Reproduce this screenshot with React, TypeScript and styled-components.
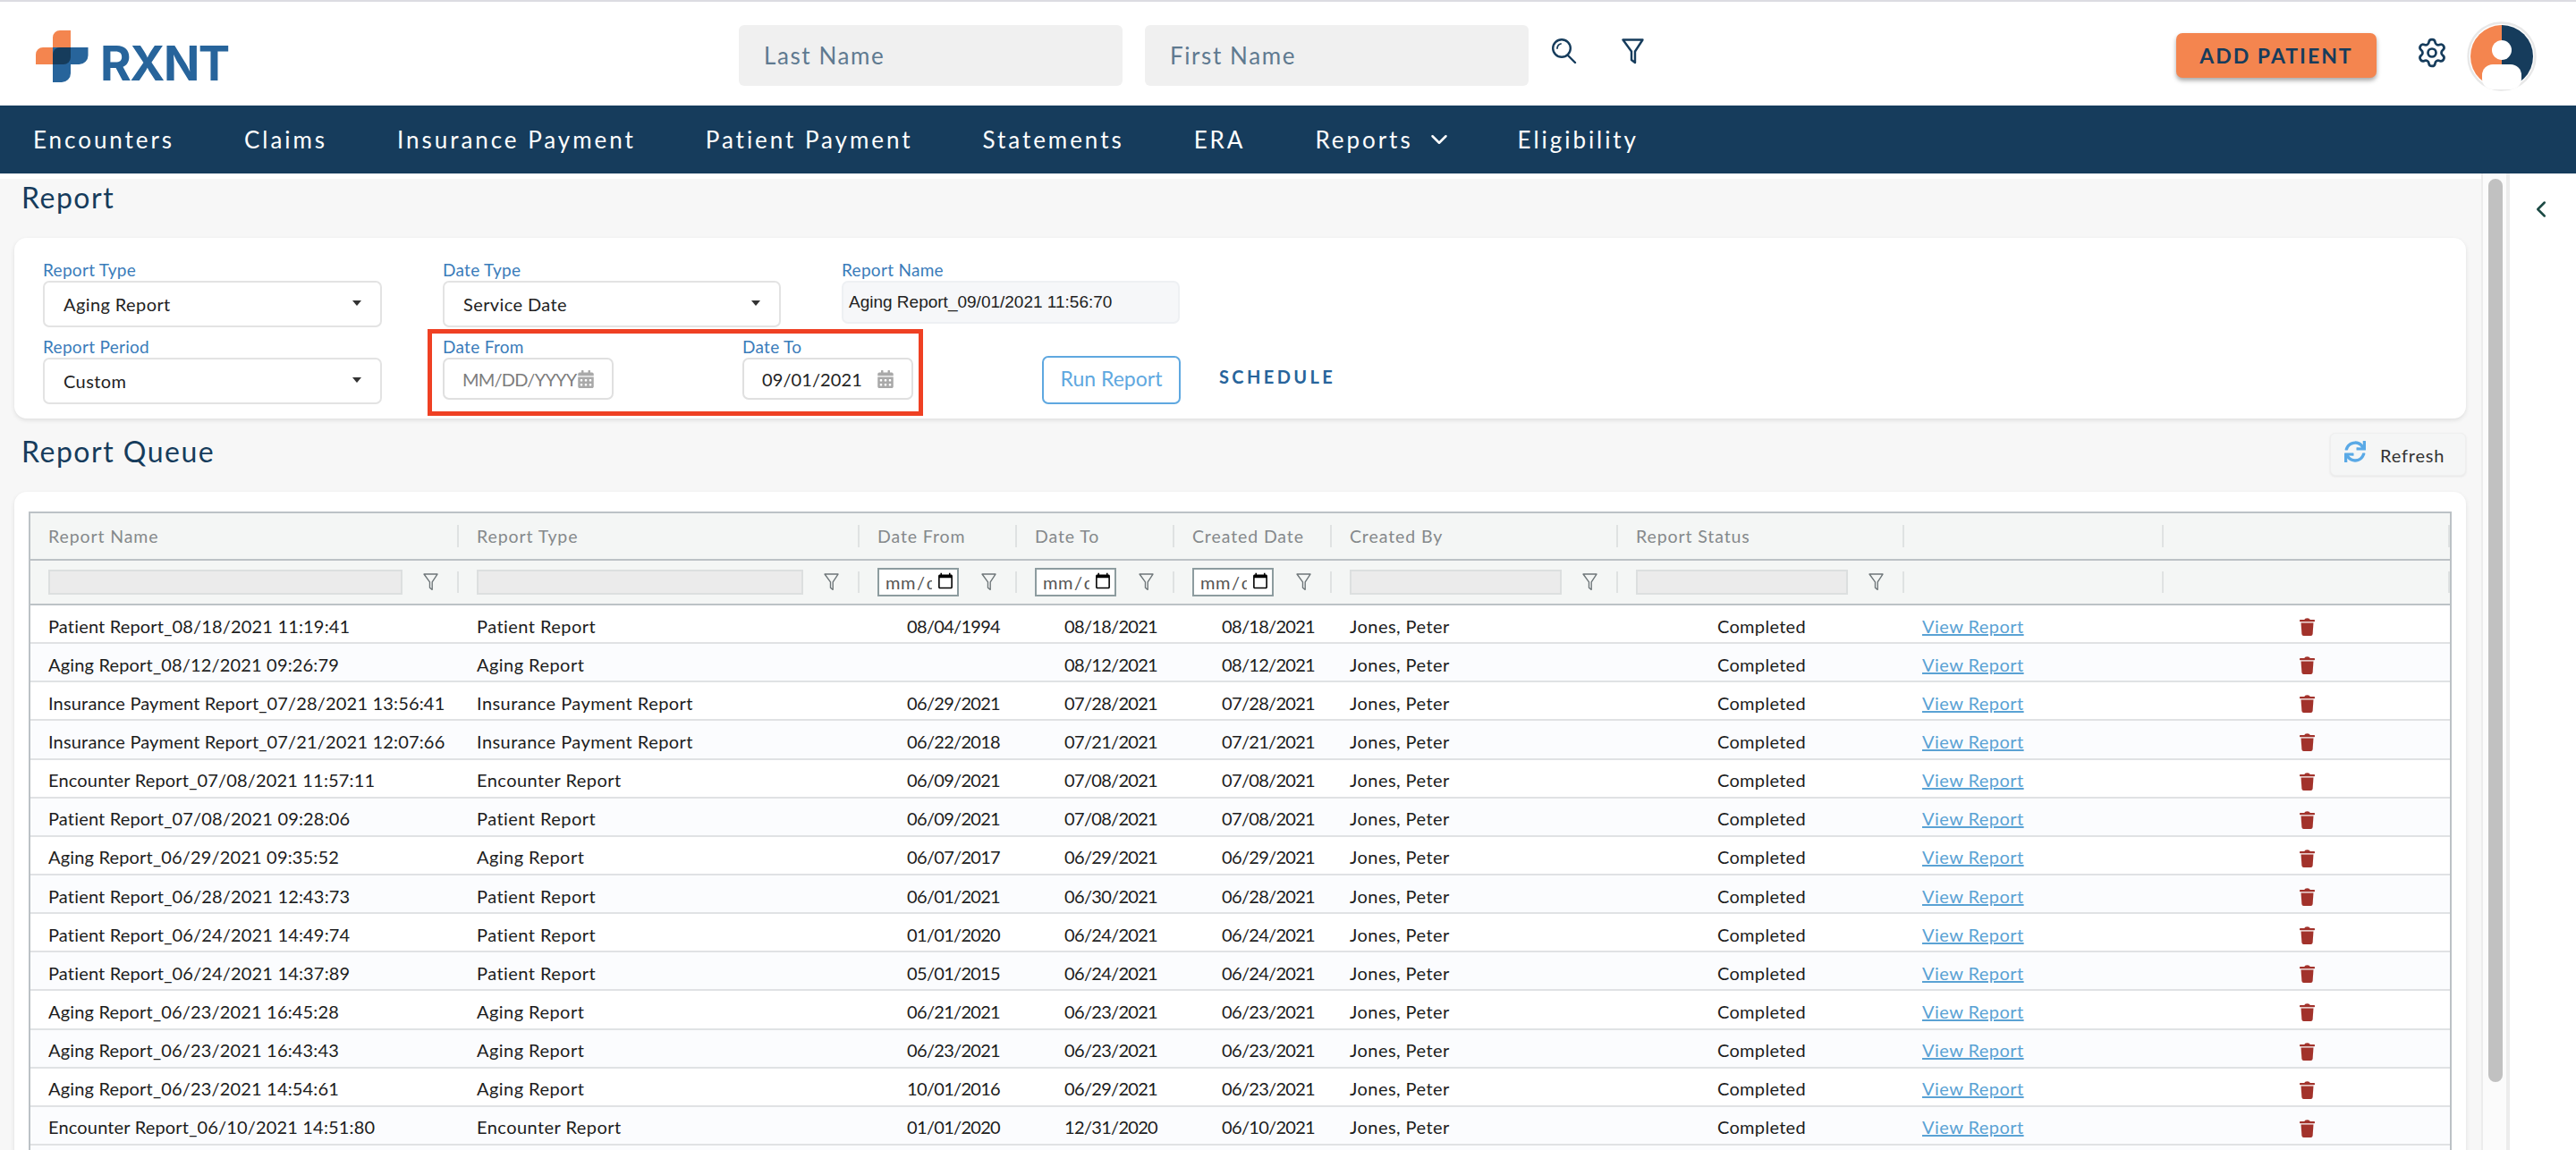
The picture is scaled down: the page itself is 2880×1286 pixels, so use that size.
import styled, { createGlobalStyle } from 'styled-components';
import { ChevronDown, ChevronLeft, Settings } from 'lucide-react';
import { FaCalendarAlt, FaSync } from 'react-icons/fa';

const FONT = 'Lato, "Open Sans", sans-serif';
const NAVY = '#163c5c';
const COLUMNS = '479px 448px 176px 176px 176px 320px 320px 290px 320px';

const NAV_ITEMS = ['Encounters', 'Claims', 'Insurance Payment', 'Patient Payment', 'Statements', 'ERA', 'Reports', 'Eligibility'];

const ROWS = [
  ['Patient Report_08/18/2021 11:19:41', 'Patient Report', '08/04/1994', '08/18/2021', '08/18/2021'],
  ['Aging Report_08/12/2021 09:26:79', 'Aging Report', '', '08/12/2021', '08/12/2021'],
  ['Insurance Payment Report_07/28/2021 13:56:41', 'Insurance Payment Report', '06/29/2021', '07/28/2021', '07/28/2021'],
  ['Insurance Payment Report_07/21/2021 12:07:66', 'Insurance Payment Report', '06/22/2018', '07/21/2021', '07/21/2021'],
  ['Encounter Report_07/08/2021 11:57:11', 'Encounter Report', '06/09/2021', '07/08/2021', '07/08/2021'],
  ['Patient Report_07/08/2021 09:28:06', 'Patient Report', '06/09/2021', '07/08/2021', '07/08/2021'],
  ['Aging Report_06/29/2021 09:35:52', 'Aging Report', '06/07/2017', '06/29/2021', '06/29/2021'],
  ['Patient Report_06/28/2021 12:43:73', 'Patient Report', '06/01/2021', '06/30/2021', '06/28/2021'],
  ['Patient Report_06/24/2021 14:49:74', 'Patient Report', '01/01/2020', '06/24/2021', '06/24/2021'],
  ['Patient Report_06/24/2021 14:37:89', 'Patient Report', '05/01/2015', '06/24/2021', '06/24/2021'],
  ['Aging Report_06/23/2021 16:45:28', 'Aging Report', '06/21/2021', '06/23/2021', '06/23/2021'],
  ['Aging Report_06/23/2021 16:43:43', 'Aging Report', '06/23/2021', '06/23/2021', '06/23/2021'],
  ['Aging Report_06/23/2021 14:54:61', 'Aging Report', '10/01/2016', '06/29/2021', '06/23/2021'],
  ['Encounter Report_06/10/2021 14:51:80', 'Encounter Report', '01/01/2020', '12/31/2020', '06/10/2021'],
];

const GlobalStyle = createGlobalStyle`
  html, body {
    margin: 0;
    padding: 0;
    background: #fff;
    font-family: ${FONT};
  }
  * {
    box-sizing: border-box;
  }
`;

const Page = styled.div`
  height: 100vh;
  display: flex;
  flex-direction: column;
  overflow: hidden;
  border-top: 2px solid #dcdce2;
`;

const Header = styled.header`
  height: 116px;
  flex: none;
  display: flex;
  align-items: center;
  padding: 0 44px 0 40px;
`;

const Logo = styled.div`
  width: 786px;
  margin-top: 6px;
  display: flex;
  align-items: center;
  gap: 13px;
`;

const LogoText = styled.span`
  padding-top: 16px;
  font-family: Inter, sans-serif;
  font-weight: 700;
  font-size: 53px;
  letter-spacing: -1.5px;
  line-height: 60px;
  color: #27649b;
`;

const SearchBox = styled.div`
  width: 429px;
  height: 68px;
  margin-right: 25px;
  margin-top: 4px;
  padding-left: 28px;
  display: flex;
  align-items: center;
  border-radius: 6px;
  background: #f0f0f0;
  color: #5f7a90;
  font-size: 26px;
  letter-spacing: 1.6px;
`;

const IconButton = styled.div<{ $gap: number }>`
  display: flex;
  margin-right: ${(p) => p.$gap}px;
  margin-top: -6px;
  color: ${NAVY};
`;

const AddPatient = styled.button`
  width: 224px;
  height: 50px;
  margin-left: auto;
  margin-top: 4px;
  border: 0;
  border-radius: 7px;
  background: #f4854f;
  color: ${NAVY};
  font-family: ${FONT};
  font-weight: 700;
  font-size: 23px;
  letter-spacing: 2px;
  box-shadow: 0 3px 5px rgba(0, 0, 0, 0.35);
`;

const Gear = styled.div`
  display: flex;
  margin: -2px 21px 0 44px;
  color: ${NAVY};
`;

const Avatar = styled.svg`
  width: 78px;
  height: 78px;
  margin-top: 6px;
`;

const Nav = styled.nav`
  height: 76px;
  flex: none;
  display: flex;
  align-items: center;
  gap: 78px;
  padding-left: 37px;
  background: ${NAVY};
`;

const NavItem = styled.span`
  display: flex;
  align-items: center;
  gap: 14px;
  color: #fff;
  font-size: 26px;
  letter-spacing: 2.95px;

  svg {
    margin-right: -5px;
  }
`;

const Body = styled.div`
  flex: 1;
  min-height: 0;
  display: flex;
`;

const Main = styled.main`
  flex: 1;
  min-width: 0;
  margin-top: 6px;
  padding: 0 17px 0 16px;
  background: #f7f7f7;
  overflow: hidden;
`;

const Track = styled.div`
  width: 32px;
  flex: none;
  padding: 6px 4px 0 6px;
  background: #fbfbfb;
  border-left: 2px solid #ececec;
  border-right: 4px solid #ececec;
`;

const Thumb = styled.div`
  height: 1010px;
  border-radius: 8px;
  background: #c1c1c1;
`;

const SidePanel = styled.aside`
  width: 74px;
  flex: none;
  padding: 25px 0 0 20px;
  color: #1c4a44;
`;

const PageTitle = styled.h1`
  margin: 0 0 24px 8px;
  height: 42px;
  color: ${NAVY};
  font-size: 32px;
  line-height: 42px;
  font-weight: 400;
  letter-spacing: 1.5px;
`;

const Card = styled.section`
  background: #fff;
  border-radius: 14px;
  box-shadow: 0 2px 5px rgba(0, 0, 0, 0.1);
`;

const FormCard = styled(Card)`
  height: 202px;
  padding: 24px 32px 16px;
  display: flex;
  flex-direction: column;
  gap: 10px;
`;

const FormRow = styled.div`
  display: flex;
  align-items: flex-start;
  gap: 68px;
`;

const Field = styled.div<{ $width: number }>`
  width: ${(p) => p.$width}px;
  flex: none;
`;

const Label = styled.div`
  height: 24px;
  color: #3a7cba;
  font-size: 19px;
  line-height: 24px;
  letter-spacing: 0.3px;
`;

const Select = styled.div`
  height: 52px;
  padding: 0 22px 0 21px;
  display: flex;
  align-items: center;
  justify-content: space-between;
  border: 2px solid #e3e3e3;
  border-radius: 7px;
  color: #222;
  font-size: 20px;
  letter-spacing: 0.4px;
`;

const Caret = styled.span`
  margin: -3px -1px 0 0;
  border-left: 5px solid transparent;
  border-right: 5px solid transparent;
  border-top: 6px solid #333;
`;

const NameInput = styled.div`
  height: 48px;
  padding-left: 6px;
  display: flex;
  align-items: center;
  border: 2px solid #eef0f3;
  border-radius: 7px;
  background: #f6f7f9;
  color: #222;
  font-family: 'Liberation Sans', Arial, sans-serif;
  font-size: 19px;
`;

const DateGroup = styled.div`
  position: relative;
  display: flex;
  gap: 144px;
`;

const Highlight = styled.div`
  position: absolute;
  left: -17px;
  right: -11px;
  top: -8px;
  height: 97px;
  border: 5px solid #ef4023;
  pointer-events: none;
`;

const DateBox = styled.div<{ $empty?: boolean }>`
  height: 47px;
  padding: 0 19px 0 20px;
  display: flex;
  align-items: center;
  justify-content: space-between;
  border: 2px solid #e0e0e0;
  border-radius: 7px;
  color: ${(p) => (p.$empty ? '#7d7d7d' : '#222')};
  font-size: 20px;
  letter-spacing: ${(p) => (p.$empty ? -0.8 : 0.1)}px;
  white-space: nowrap;

  svg {
    flex: none;
    color: #a9a9a9;
  }
`;

const RunButton = styled.button`
  width: 155px;
  height: 54px;
  margin: 22px 0 0 76px;
  padding: 0 0 4px;
  border: 2px solid #5fa8e0;
  border-radius: 7px;
  background: #fff;
  color: #5fa8e0;
  font-family: ${FONT};
  font-size: 23px;
`;

const ScheduleLink = styled.a`
  margin: 33px 0 0 -25px;
  color: #27649b;
  font-weight: 700;
  font-size: 20px;
  letter-spacing: 3.4px;
`;

const QueueBar = styled.div`
  height: 48px;
  margin: 16px 0 18px;
  display: flex;
  align-items: center;
  justify-content: space-between;
`;

const QueueTitle = styled.h2`
  margin: 0 0 7px 8px;
  color: ${NAVY};
  font-size: 32px;
  font-weight: 400;
  letter-spacing: 1.5px;
`;

const RefreshButton = styled.button`
  width: 152px;
  height: 48px;
  padding: 2px 0 0 15px;
  display: flex;
  align-items: center;
  gap: 16px;
  border: 1px solid #efefef;
  border-radius: 6px;
  background: #f5f6f6;
  box-shadow: 0 1px 3px rgba(0, 0, 0, 0.08);
  color: #333;
  font-family: ${FONT};
  font-size: 20px;
  letter-spacing: 0.8px;

  svg {
    color: #5aa9e6;
    margin-top: -8px;
  }
`;

const QueueCard = styled(Card)`
  padding: 22px 16px 0;
`;

const Table = styled.div`
  border: 2px solid #bcc2c6;
  border-bottom: 0;
`;

const HeadRow = styled.div`
  display: grid;
  grid-template-columns: ${COLUMNS};
  height: 53px;
  align-items: center;
  background: #f4f6f5;
  border-bottom: 2px solid #bcc2c6;
`;

const HeadCell = styled.div`
  height: 25px;
  padding-left: 20px;
  border-right: 2px solid #dfe2e2;
  color: #85898b;
  font-size: 19.5px;
  line-height: 25px;
  letter-spacing: 0.9px;
`;

const FilterRow = styled(HeadRow)`
  height: 50px;
`;

const FilterCell = styled.div`
  height: 24px;
  padding: 0 21px 0 20px;
  display: flex;
  align-items: center;
  justify-content: space-between;
  border-right: 2px solid #dfe2e2;
`;

const FilterInput = styled.div`
  flex: 1;
  height: 28px;
  margin-right: 23px;
  background: #ebebeb;
  border: 2px solid #dcdfdf;
`;

const DateFilter = styled.input`
  width: 91px;
  height: 32px;
  flex: none;
  padding: 0 3px 0 6px;
  border: 2.5px solid #8d9c9f;
  border-radius: 0;
  background: #fff;
  color: #555;
  font-family: ${FONT};
  font-size: 20px;
  letter-spacing: 0.6px;

  &::-webkit-calendar-picker-indicator {
    width: 20px;
    height: 22px;
    margin: 0 0 0 5px;
    padding: 0;
  }
`;

const Row = styled.div<{ $alt: boolean }>`
  display: grid;
  grid-template-columns: ${COLUMNS};
  height: 43.15px;
  padding-top: 4px;
  align-items: center;
  background: ${(p) => (p.$alt ? '#fbfcfe' : '#fff')};
  border-bottom: 2px solid #e0e2e4;
  color: #1c1c1c;
  font-size: 20px;
  letter-spacing: 0.45px;
`;

const Cell = styled.div`
  padding: 0 19px 0 20px;
  overflow: hidden;
  white-space: nowrap;
`;

const NameCell = styled(Cell)`
  letter-spacing: 0.17px;
`;

const DateCell = styled(Cell)`
  text-align: right;
  letter-spacing: -0.7px;
`;

const StatusCell = styled(Cell)`
  text-align: center;
  letter-spacing: 0.3px;
`;

const ViewLink = styled.a`
  color: #5aa2d4;
  text-decoration: underline;
`;

const TrashCell = styled.div`
  display: flex;
  justify-content: center;
  padding-top: 3px;
`;

const Funnel = ({ size, color, weight }: { size: number; color: string; weight: number }) => (
  <svg width={size} height={size * 1.16} viewBox="0 0 25 29" fill="none" stroke={color} strokeWidth={weight} strokeLinejoin="round" style={{ flex: 'none' }}>
    <path d="M1.5 1.5h22l-8.500 13v12.500l-4-3v-9.500z" />
  </svg>
);

const Magnifier = () => (
  <svg width="30" height="28" viewBox="0 0 30 28" fill="none" stroke={NAVY} strokeWidth="2.400" strokeLinecap="round">
    <circle cx="12" cy="11" r="9.800" />
    <path d="M19 19l8 8" />
    <path d="M7 11a5.500 5.500 0 0 1 4-5" strokeWidth="1.800" />
  </svg>
);

const LogoMark = () => (
  <svg width="59" height="58" viewBox="0 0 59 58">
    <path fill="#f4854f" d="M19 8a8 8 0 0 1 8-8h12v30a8 8 0 0 1-8 8H0V27a8 8 0 0 1 8-8h11z" />
    <path fill="#27649b" d="M19 19h39.500v9a10 10 0 0 1-10 10H39v10a10 10 0 0 1-10 10H19z" />
    <path fill={NAVY} d="M27 19h12v11a8 8 0 0 1-8 8H19V27a8 8 0 0 1 8-8z" />
  </svg>
);

const TrashIcon = () => (
  <svg width="17" height="20" viewBox="0 0 17 20" fill="#a2322b">
    <path d="M5.500 2Q5.500 0.300 8.500 0.300T11.500 2z" />
    <rect x="0" y="2" width="17" height="2.200" rx="0.800" />
    <path d="M1.500 5.500h14l-0.900 12.500q-0.200 2-2.100 2H4.500q-1.900 0-2.100-2z" />
  </svg>
);

const DateFilterCell = ({ label }: { label: string }) => (
  <FilterCell>
    <DateFilter type="date" aria-label={label} />
    <Funnel size={17} color="#6d7578" weight={2} />
  </FilterCell>
);

const TextFilter = () => (
  <FilterCell>
    <FilterInput />
    <Funnel size={17} color="#6d7578" weight={2} />
  </FilterCell>
);

const App = () => {
  return (
    <Page>
      <GlobalStyle />
      <Header>
        <Logo>
          <LogoMark />
          <LogoText>RXNT</LogoText>
        </Logo>
        <SearchBox>Last Name</SearchBox>
        <SearchBox>First Name</SearchBox>
        <IconButton $gap={49}>
          <Magnifier />
        </IconButton>
        <IconButton $gap={0}>
          <Funnel size={25} color={NAVY} weight={2.4} />
        </IconButton>
        <AddPatient>ADD PATIENT</AddPatient>
        <Gear>
          <Settings size={36} strokeWidth={1.8} />
        </Gear>
        <Avatar viewBox="0 0 78 78">
          <circle cx="39" cy="39" r="37.500" fill="#fff" stroke="#e8e8e8" strokeWidth="2.500" />
          <path fill="#f4854f" d="M39 4a35 35 0 0 0 0 70z" />
          <path fill={NAVY} d="M39 4a35 35 0 0 1 0 70z" />
          <circle cx="39" cy="32" r="11" fill="#fff" />
          <rect x="17" y="48" width="44" height="28" rx="12" fill="#fff" />
        </Avatar>
      </Header>

      <Nav>
        {NAV_ITEMS.map((item) => (
          <NavItem key={item}>
            {item}
            {item === 'Reports' && <ChevronDown size={30} strokeWidth={2} />}
          </NavItem>
        ))}
      </Nav>

      <Body>
        <Main>
          <PageTitle>Report</PageTitle>
          <FormCard>
            <FormRow>
              <Field $width={379}>
                <Label>Report Type</Label>
                <Select>
                  Aging Report
                  <Caret />
                </Select>
              </Field>
              <Field $width={378}>
                <Label>Date Type</Label>
                <Select>
                  Service Date
                  <Caret />
                </Select>
              </Field>
              <Field $width={378}>
                <Label>Report Name</Label>
                <NameInput>Aging Report_09/01/2021 11:56:70</NameInput>
              </Field>
            </FormRow>
            <FormRow>
              <Field $width={379}>
                <Label>Report Period</Label>
                <Select>
                  Custom
                  <Caret />
                </Select>
              </Field>
              <DateGroup>
                <Field $width={191}>
                  <Label>Date From</Label>
                  <DateBox $empty>
                    MM/DD/YYYY
                    <FaCalendarAlt size={20} />
                  </DateBox>
                </Field>
                <Field $width={191}>
                  <Label>Date To</Label>
                  <DateBox>
                    09/01/2021
                    <FaCalendarAlt size={20} />
                  </DateBox>
                </Field>
                <Highlight />
              </DateGroup>
              <RunButton>Run Report</RunButton>
              <ScheduleLink>SCHEDULE</ScheduleLink>
            </FormRow>
          </FormCard>

          <QueueBar>
            <QueueTitle>Report Queue</QueueTitle>
            <RefreshButton>
              <FaSync size={24} />
              Refresh
            </RefreshButton>
          </QueueBar>

          <QueueCard>
            <Table>
              <HeadRow>
                <HeadCell>Report Name</HeadCell>
                <HeadCell>Report Type</HeadCell>
                <HeadCell>Date From</HeadCell>
                <HeadCell>Date To</HeadCell>
                <HeadCell>Created Date</HeadCell>
                <HeadCell>Created By</HeadCell>
                <HeadCell>Report Status</HeadCell>
                <HeadCell />
                <HeadCell />
              </HeadRow>
              <FilterRow>
                <TextFilter />
                <TextFilter />
                <DateFilterCell label="Date From" />
                <DateFilterCell label="Date To" />
                <DateFilterCell label="Created Date" />
                <TextFilter />
                <TextFilter />
                <FilterCell />
                <FilterCell />
              </FilterRow>
              {ROWS.map((row, i) => (
                <Row key={row[0]} $alt={i % 2 === 1}>
                  <NameCell>{row[0]}</NameCell>
                  <Cell>{row[1]}</Cell>
                  <DateCell>{row[2]}</DateCell>
                  <DateCell>{row[3]}</DateCell>
                  <DateCell>{row[4]}</DateCell>
                  <Cell>Jones, Peter</Cell>
                  <StatusCell>Completed</StatusCell>
                  <Cell>
                    <ViewLink href="#">View Report</ViewLink>
                  </Cell>
                  <TrashCell>
                    <TrashIcon />
                  </TrashCell>
                </Row>
              ))}
              <Row $alt />
            </Table>
          </QueueCard>
        </Main>
        <Track>
          <Thumb />
        </Track>
        <SidePanel>
          <ChevronLeft size={30} strokeWidth={2} />
        </SidePanel>
      </Body>
    </Page>
  );
};

export default App;
